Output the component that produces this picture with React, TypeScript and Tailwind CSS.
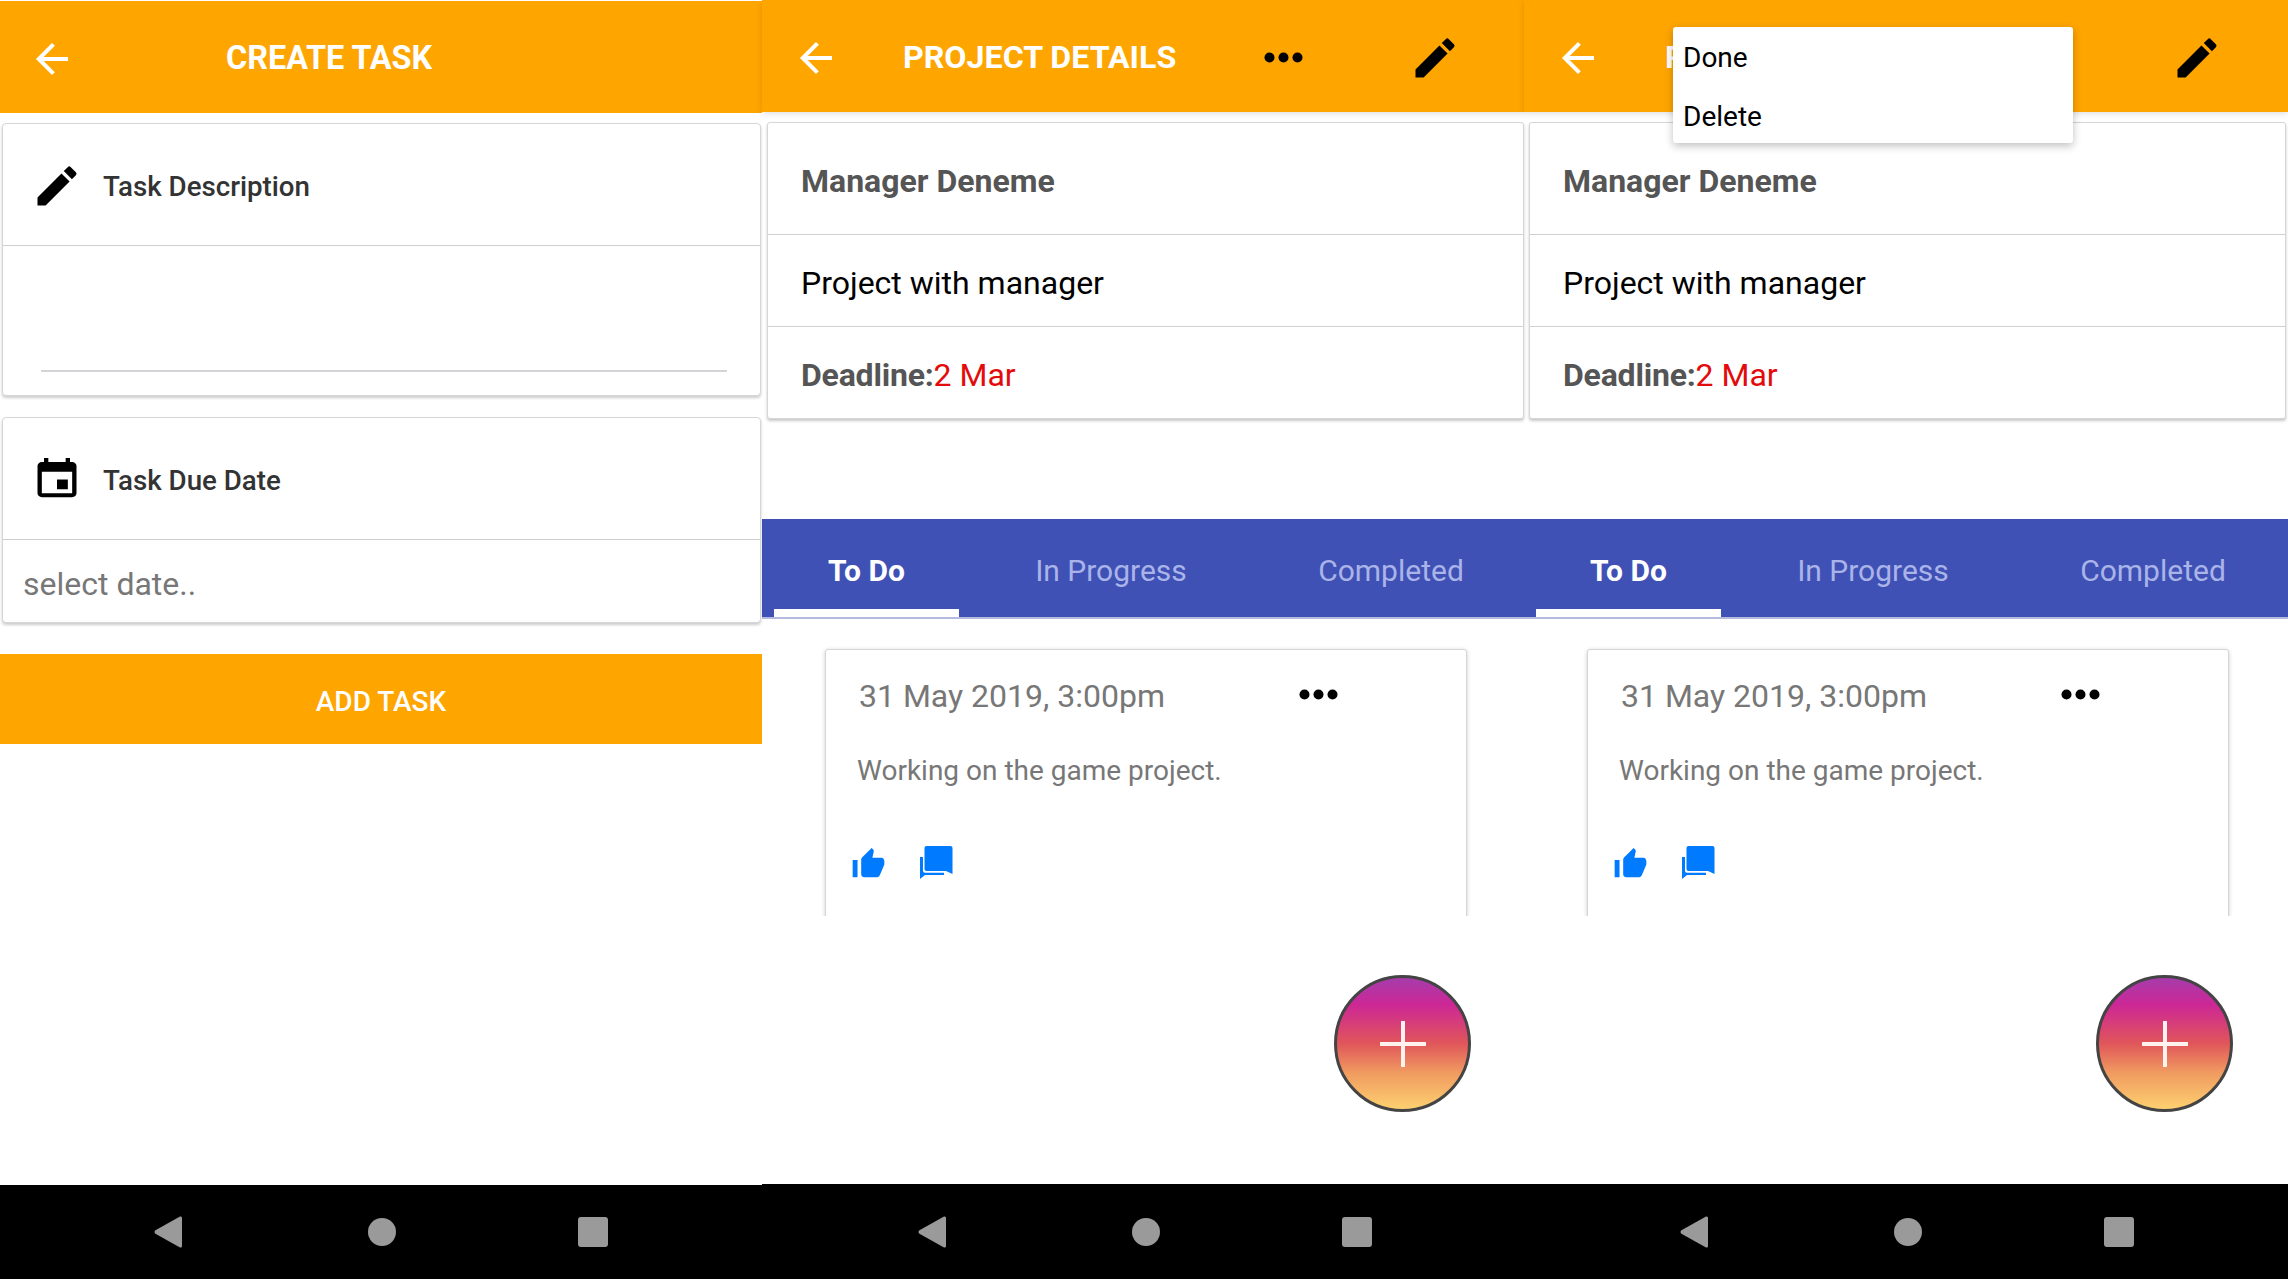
import type { ReactNode } from "react";
import { MdEdit, MdEvent } from "react-icons/md";
import { IoMdArrowBack, IoMdThumbsUp } from "react-icons/io";

const Dots = () => (
  <svg width="39" height="11" viewBox="0 0 39 11" className="fill-black">
    <circle cx="5.5" cy="5.5" r="5" />
    <circle cx="19.5" cy="5.5" r="5" />
    <circle cx="33.5" cy="5.5" r="5" />
  </svg>
);

const Chat = () => (
  <svg width="33" height="33" viewBox="0 0 33 33" className="fill-[#007aff] shrink-0">
    <path d="M6.5 0H30.5Q32.5 0 32.5 2V28L26 25H6.5Q4.5 25 4.5 23V2Q4.5 0 6.5 0Z" />
    <path d="M0 11H3V25Q3 26.7 5 26.7H24V29H5L0 33Z" />
  </svg>
);

const Nav = ({ h, left }: { h: string; left: string }) => (
  <div className={`mt-auto bg-black flex items-center ${h} ${left}`}>
    <svg width="28" height="32" viewBox="0 0 28 32" className="fill-[#9a9a9a] shrink-0">
      <path d="M26 0.5 Q28 0 28 2 V30 Q28 32 26 31.5 L1 17.5 Q0 16 1 14.5 Z" />
    </svg>
    <div className="w-[28px] h-[28px] rounded-full bg-[#9a9a9a] shrink-0 ml-[186px]" />
    <div className="w-[30px] h-[30px] rounded-[3px] bg-[#9a9a9a] shrink-0 ml-[182px]" />
  </div>
);

const Detail = ({ pad, listPad, fabPad }: { pad: string; listPad: string; fabPad: string }) => (
  <>
    <div className={`h-[297px] ${pad}`}>
      <div className="h-full bg-white border border-[#d6d6d6] rounded-[3px] shadow-[0_2px_3px_rgba(0,0,0,0.22)] flex flex-col">
        <div className="h-[112px] border-b border-[#d0d0d0] pl-[33px] pt-[38px] text-[32px] leading-[40px] font-bold text-[#555555]">Manager Deneme</div>
        <div className="h-[92px] border-b border-[#d0d0d0] pl-[33px] pt-[4px] flex items-center text-[32px] text-black">Project with manager</div>
        <div className="flex-1 pl-[33px] pt-[4px] flex items-center text-[32px]">
          <span className="font-bold text-[#555555] tracking-[-0.2px]">Deadline:</span>
          <span className="text-[#e30b0b]">2 Mar</span>
        </div>
      </div>
    </div>
    <div className="h-[100px] mt-[100px] bg-[#3f51b5] border-b-2 border-[#b4bbdf] flex text-[30px]">
      <div className="w-[185px] ml-[12px] h-[98px] border-b-[8px] border-white pt-[12px] flex items-center justify-center font-bold text-white">To Do</div>
      <div className="w-[304px] flex items-center justify-center text-[#aab4e8] pb-[8px] pt-[12px]">In Progress</div>
      <div className="w-[256px] flex items-center justify-center text-[#aab4e8] pb-[8px] pt-[12px]">Completed</div>
    </div>
    <div className={`h-[297px] overflow-hidden pl-[63px] pt-[30px] ${listPad}`}>
      <div className="h-[400px] bg-white border border-[#d6d6d6] rounded-[3px] shadow-[0_1px_4px_rgba(0,0,0,0.2)]">
        <div className="flex items-center pl-[33px] pt-[23px]">
          <span className="w-[440px] pt-[3px] text-[32px] leading-[40px] text-[#777777]">31 May 2019, 3:00pm</span>
          <Dots />
        </div>
        <div className="pl-[31px] mt-[37px] text-[28px] leading-[36px] text-[#777777]">Working on the game project.</div>
        <div className="flex items-center pl-[23px] mt-[54px] gap-[32px]">
          <IoMdThumbsUp className="text-[#007aff] w-[39px] h-[39px] shrink-0" />
          <Chat />
        </div>
      </div>
    </div>
    <div className={`flex justify-end mt-[59px] ${fabPad}`}>
      <div className="w-[137px] h-[137px] rounded-full border-[3px] border-[#444444] bg-[linear-gradient(180deg,#a63cab_0%,#cc2796_20%,#e0565a_50%,#f09a60_72%,#fdd070_100%)] flex items-center justify-center">
        <svg width="46" height="46" viewBox="0 0 46 46" className="stroke-[#fff2ee]" strokeWidth="4">
          <path d="M23 0V46M0 23H46" />
        </svg>
      </div>
    </div>
  </>
);

const Header = ({ title, leftPad }: { title: string; leftPad: string }) => (
  <div className={`h-[112px] shrink-0 bg-[#ffa500] flex items-center pt-[3px] shadow-[0_2px_6px_rgba(0,0,0,0.12)] ${leftPad}`}>
    <IoMdArrowBack className="text-white w-[48px] h-[48px] shrink-0" />
    <span className="ml-[63px] text-[32.2px] font-bold text-white">{title}</span>
    <span className="ml-[88px]"><Dots /></span>
    <MdEdit className="text-black w-[52px] h-[52px] ml-[106px]" />
  </div>
);

const FormCard = ({ icon, title, body, h }: { icon: ReactNode; title: string; body: ReactNode; h: string }) => (
  <div className={`ml-[2px] w-[759px] bg-white border border-[#d6d6d6] rounded-[4px] shadow-[0_2px_3px_rgba(0,0,0,0.2)] flex flex-col ${h}`}>
    <div className="h-[122px] shrink-0 border-b border-[#cfcfcf] flex items-center pl-[28px] pt-[2px]">
      {icon}
      <span className="ml-[20px] pt-[2px] text-[27.7px] font-medium text-[#333333]">{title}</span>
    </div>
    {body}
  </div>
);

export default function App() {
  return (
    <div className="w-[2288px] h-[1279px] bg-white overflow-hidden flex font-['Roboto',sans-serif]">
      <div className="w-[762px] h-full shrink-0 flex flex-col pt-[1px]">
        <div className="h-[112px] shrink-0 bg-[#ffa500] flex items-center pl-[28px] pt-[3px]">
          <IoMdArrowBack className="text-white w-[48px] h-[48px] shrink-0" />
          <span className="ml-[150px] text-[32.4px] font-bold text-white">CREATE TASK</span>
        </div>
        <div className="mt-[10px]">
          <FormCard
            h="h-[273px]"
            icon={<MdEdit className="text-black w-[52px] h-[52px]" />}
            title="Task Description"
            body={<div className="mt-[124px] ml-[38px] mr-[33px] h-[2px] bg-[#d4d4d8]" />}
          />
        </div>
        <div className="mt-[21px]">
          <FormCard
            h="h-[206px]"
            icon={<MdEvent className="text-black w-[52px] h-[47px]" preserveAspectRatio="none" />}
            title="Task Due Date"
            body={<div className="flex-1 pl-[20px] pt-[6px] flex items-center text-[32px] text-[#777777]">select date..</div>}
          />
        </div>
        <div className="mt-[31px] h-[90px] bg-[#ffa500] pt-[5px] flex items-center justify-center text-[28px] font-medium text-white">ADD TASK</div>
        <Nav h="h-[94px]" left="pl-[154px]" />
      </div>
      <div className="w-[762px] h-full shrink-0 flex flex-col">
        <Header title="PROJECT DETAILS" leftPad="pl-[30px]" />
        <div className="h-[10px]" />
        <Detail pad="pl-[5px]" listPad="pr-[57px]" fabPad="pr-[53px]" />
        <Nav h="h-[95px]" left="pl-[156px]" />
      </div>
      <div className="w-[764px] h-full shrink-0 flex flex-col relative">
        <Header title="PROJECT DETAILS" leftPad="pl-[30px]" />
        <div className="h-[10px]" />
        <Detail pad="pl-[5px] pr-[2px]" listPad="pr-[59px]" fabPad="pr-[55px]" />
        <Nav h="h-[95px]" left="pl-[156px]" />
        <div className="absolute left-[149px] top-[27px] w-[400px] h-[116px] bg-white rounded-[3px] shadow-[0_3px_8px_rgba(0,0,0,0.25)] text-[28px] text-black flex flex-col pl-[10px]">
          <div className="h-[58px] pt-[4px] flex items-center">Done</div>
          <div className="h-[58px] pt-[5px] flex items-center">Delete</div>
        </div>
      </div>
    </div>
  );
}
